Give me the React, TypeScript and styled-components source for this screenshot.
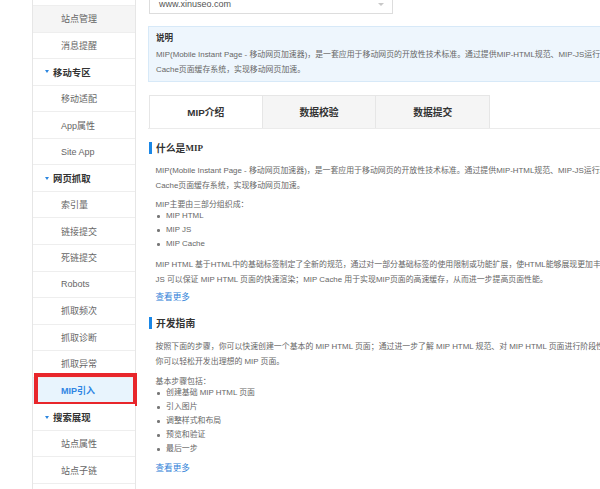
import React from 'react'
import styled, { createGlobalStyle } from 'styled-components'

type NavItem = {
  label: string
  group?: boolean
  state?: 'hover' | 'active'
}

const navItems: NavItem[] = [
  { label: '站点信息' },
  { label: '站点管理', state: 'hover' },
  { label: '消息提醒' },
  { label: '移动专区', group: true },
  { label: '移动适配' },
  { label: 'App属性' },
  { label: 'Site App' },
  { label: '网页抓取', group: true },
  { label: '索引量' },
  { label: '链接提交' },
  { label: '死链提交' },
  { label: 'Robots' },
  { label: '抓取频次' },
  { label: '抓取诊断' },
  { label: '抓取异常' },
  { label: 'MIP引入', state: 'active' },
  { label: '搜索展现', group: true },
  { label: '站点属性' },
  { label: '站点子链' },
  { label: '流量与关键词' },
]

const introLines = [
  'MIP(Mobile Instant Page - 移动网页加速器)，是一套应用于移动网页的开放性技术标准。通过提供MIP-HTML规范、MIP-JS运行环境以及MIP-',
  'Cache页面缓存系统，实现移动网页加速。',
]

const tabs = ['MIP介绍', '数据校验', '数据提交']

export default function App() {
  return (
    <>
      <GlobalStyle />
      <Page>
        <Sidebar>
          {navItems.map((item) => (
            <NavRow key={item.label} $group={item.group} $state={item.state}>
              {item.group && <Caret />}
              {item.label}
              {item.state === 'active' && <Annotation />}
            </NavRow>
          ))}
        </Sidebar>

        <Main>
          <SiteSelect>
            <span>www.xinuseo.com</span>
            <SelectArrow />
          </SiteSelect>

          <Notice>
            <NoticeTitle>说明</NoticeTitle>
            {introLines.map((line) => (
              <Line key={line}>{line}</Line>
            ))}
          </Notice>

          <TabBar>
            {tabs.map((tab, i) => (
              <Tab key={tab} $active={i === 0}>
                {tab}
              </Tab>
            ))}
          </TabBar>

          <SectionTitle>
            什么是<SerifText>MIP</SerifText>
          </SectionTitle>
          <Paragraph>
            {introLines.map((line) => (
              <Line key={line}>{line}</Line>
            ))}
          </Paragraph>
          <Lead>MIP主要由三部分组织成：</Lead>
          <BulletList>
            <li>MIP HTML</li>
            <li>MIP JS</li>
            <li>MIP Cache</li>
          </BulletList>
          <Paragraph $gap={6}>
            <Line>
              MIP HTML 基于HTML中的基础标签制定了全新的规范，通过对一部分基础标签的使用限制或功能扩展，使HTML能够展现更加丰富的内容；MIP
            </Line>
            <Line>JS 可以保证 MIP HTML 页面的快速渲染；MIP Cache 用于实现MIP页面的高速缓存，从而进一步提高页面性能。</Line>
          </Paragraph>
          <MoreLink>查看更多</MoreLink>

          <SectionTitle $gap={10.5}>开发指南</SectionTitle>
          <Paragraph $gap={9.5}>
            <Line>
              按照下面的步骤，你可以快速创建一个基本的 MIP HTML 页面；通过进一步了解 MIP HTML 规范、对 MIP HTML 页面进行阶段性的验证，
            </Line>
            <Line $tall>你可以轻松开发出理想的 MIP 页面。</Line>
          </Paragraph>
          <Lead>基本步骤包括：</Lead>
          <BulletList>
            <li>创建基础 MIP HTML 页面</li>
            <li>引入图片</li>
            <li>调整样式和布局</li>
            <li>预览和验证</li>
            <li>最后一步</li>
          </BulletList>
          <MoreLink $gap={4.5}>查看更多</MoreLink>
        </Main>
      </Page>
    </>
  )
}

const GlobalStyle = createGlobalStyle`
  html, body {
    margin: 0;
    padding: 0;
    background: #fff;
    overflow: hidden;
  }
  body {
    font-family: "Liberation Sans", Arial, "Noto Sans CJK SC", sans-serif;
    color: #666;
  }
`

const Page = styled.div`
  display: flex;
  gap: 12px;
  width: 1000px;
  margin-top: -20.5px;
  padding-left: 32px;
`

const Sidebar = styled.nav`
  flex: 0 0 104px;
  box-sizing: border-box;
  border-left: 1px solid #e6e6e6;
  border-right: 1px solid #e6e6e6;
`

const NavRow = styled.div<{ $group?: boolean; $state?: 'hover' | 'active' }>`
  position: relative;
  display: flex;
  align-items: center;
  height: 26.55px;
  box-sizing: border-box;
  border-bottom: 1px solid #eeeeee;
  padding-left: ${(p) => (p.$group ? '12px' : '28px')};
  font-size: ${(p) => (p.$group ? '9.4px' : '9px')};
  font-weight: ${(p) => (p.$group || p.$state === 'active' ? 'bold' : 'normal')};
  color: ${(p) => (p.$state === 'active' ? '#2f86e4' : p.$group ? '#333' : '#666')};
  background: ${(p) => (p.$state === 'active' ? '#e8f4fd' : p.$state === 'hover' ? '#f5f5f5' : '#fff')};
  white-space: nowrap;
`

const Caret = styled.span`
  width: 0;
  height: 0;
  margin-right: 4px;
  border-left: 2.5px solid transparent;
  border-right: 2.5px solid transparent;
  border-top: 3px solid #2b86e0;
`

const Annotation = styled.span`
  position: absolute;
  top: -5px;
  bottom: -3px;
  left: 1px;
  right: -2px;
  border: 4px solid #e8262b;
  pointer-events: none;
`

const Main = styled.main`
  flex: 0 0 640px;
  padding-top: 12px;
`

const SiteSelect = styled.div`
  display: flex;
  align-items: flex-end;
  justify-content: space-between;
  width: 244px;
  height: 22px;
  margin-left: 1px;
  box-sizing: border-box;
  padding: 0 8px 4px 9px;
  border: 1px solid #dddddd;
  background: #fff;
  font-size: 9px;
  color: #555;
`

const SelectArrow = styled.span`
  width: 0;
  height: 0;
  margin-bottom: 3px;
  border-left: 3px solid transparent;
  border-right: 3px solid transparent;
  border-top: 3px solid #c8c8c8;
`

const Notice = styled.div`
  margin-top: 12.5px;
  height: 56px;
  box-sizing: border-box;
  padding: 4px 7px 4px;
  border: 1px solid #d7e9f8;
  background: #eef6fd;
  font-size: 7.9px;
`

const NoticeTitle = styled.div`
  line-height: 15px;
  margin-bottom: 1px;
  font-size: 8.6px;
  font-weight: bold;
  color: #333;
`

const Line = styled.div<{ $tall?: boolean }>`
  line-height: ${(p) => (p.$tall ? 16 : 15)}px;
  white-space: nowrap;
`

const TabBar = styled.div`
  display: flex;
  margin-top: 13px;
  padding-left: 1px;
  border-bottom: 1px solid #ebebeb;
`

const Tab = styled.div<{ $active?: boolean }>`
  display: flex;
  align-items: center;
  justify-content: center;
  width: 113.7px;
  height: 33px;
  box-sizing: border-box;
  border: 1px solid #e6e6e6;
  border-bottom: none;
  border-left-width: ${(p) => (p.$active ? '1px' : '0')};
  background: ${(p) => (p.$active ? '#fff' : '#f5f5f5')};
  font-size: 9.8px;
  font-weight: bold;
  color: #333;
`

const SectionTitle = styled.div<{ $gap?: number }>`
  display: flex;
  align-items: center;
  height: 14px;
  margin-top: ${(p) => p.$gap ?? 11.5}px;
  margin-left: 1px;
  font-size: 9.8px;
  font-weight: bold;
  color: #333;

  &::before {
    content: '';
    width: 3px;
    height: 12px;
    margin-right: 4px;
    background: #1a87e6;
  }
`

const SerifText = styled.span`
  font-family: "Liberation Serif", "Times New Roman", serif;
  font-size: 9px;
`

const Paragraph = styled.div<{ $gap?: number }>`
  margin-top: ${(p) => p.$gap ?? 8.5}px;
  padding-left: 7.5px;
  font-size: 7.9px;
`

const Lead = styled.div`
  margin-top: 3.5px;
  padding-left: 7.5px;
  line-height: 15px;
  font-size: 7.9px;
`

const BulletList = styled.ul`
  margin: -2.5px 0 0;
  padding: 0 0 0 18px;
  list-style: none;
  font-size: 7.9px;

  li {
    position: relative;
    line-height: 14px;
    white-space: nowrap;
  }

  li::before {
    content: '';
    position: absolute;
    left: -9px;
    top: 6px;
    width: 2.5px;
    height: 2.5px;
    border-radius: 50%;
    background: #777;
  }
`

const MoreLink = styled.a<{ $gap?: number }>`
  display: block;
  margin-top: ${(p) => p.$gap ?? 3}px;
  padding-left: 7.5px;
  line-height: 15px;
  font-size: 8.6px;
  color: #2f7fd8;
  cursor: pointer;
`
